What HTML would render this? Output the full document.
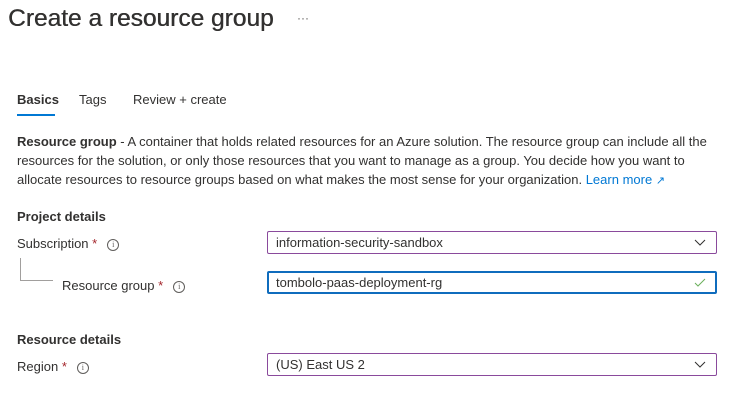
<!DOCTYPE html>
<html><head><style>
body{margin:0;width:755px;height:407px;background:#fff;font-family:"Liberation Sans",sans-serif;color:#323130;position:relative;overflow:hidden}
.a{position:absolute;white-space:nowrap}
.t{font-size:13px}
.star{color:#a4262c}
.info{display:inline-block;width:10px;height:10px;border:1px solid #605e5c;border-radius:50%;font-size:8px;line-height:10px;text-align:center;color:#605e5c;vertical-align:1px;margin-left:10px;font-family:"Liberation Serif",serif}
.box{position:absolute;left:267px;width:450px;height:23px;border:1px solid #8a4a9c;border-radius:2px;font-size:13px;line-height:21px;padding-left:8px;box-sizing:border-box}
.box svg{position:absolute;right:10px;top:7px}
</style></head><body>
<div class="a" style="left:8px;top:5px;font-size:24.5px;color:#323130;text-shadow:0.4px 0 0 #323130">Create a resource group</div>
<div class="a" style="left:297px;top:11px;font-size:12px;color:#605e5c">···</div>
<div class="a t" style="left:17px;top:92px;font-weight:bold">Basics</div>
<div class="a" style="left:17px;top:114px;width:38px;height:2px;background:#0078d4"></div>
<div class="a t" style="left:79px;top:92px">Tags</div>
<div class="a t" style="left:133px;top:92px">Review + create</div>
<div class="a t" style="left:17px;top:132px;line-height:19px"><b>Resource group</b> - A container that holds related resources for an Azure solution. The resource group can include all the<br>resources for the solution, or only those resources that you want to manage as a group. You decide how you want to<br>allocate resources to resource groups based on what makes the most sense for your organization. <span style="color:#0078d4">Learn more</span> <span style="color:#0078d4;font-size:11px">↗</span></div>
<div class="a t" style="left:17px;top:209px;font-weight:bold">Project details</div>
<div class="a t" style="left:17px;top:236px">Subscription <span class="star">*</span><span class="info">i</span></div>
<div class="a" style="left:20px;top:258px;width:32px;height:22px;border-left:1px solid #a19f9d;border-bottom:1px solid #a19f9d"></div>
<div class="a t" style="left:62px;top:278px">Resource group <span class="star">*</span><span class="info">i</span></div>
<div class="a t" style="left:17px;top:332px;font-weight:bold">Resource details</div>
<div class="a t" style="left:17px;top:359px">Region <span class="star">*</span><span class="info">i</span></div>
<div class="box" style="top:231px">information-security-sandbox<svg width="12" height="8"><path d="M1 1l5 5 5-5" stroke="#323130" fill="none"/></svg></div>
<div class="box" style="top:271px;border:2px solid #0f6cbd;padding-left:7px;line-height:19px">tombolo-paas-deployment-rg<svg width="12" height="9" style="top:5px;right:9px"><path d="M1 5l3 3 7-7" stroke="#6bb05c" fill="none"/></svg></div>
<div class="box" style="top:353px">(US) East US 2<svg width="12" height="8"><path d="M1 1l5 5 5-5" stroke="#323130" fill="none"/></svg></div>
</body></html>
